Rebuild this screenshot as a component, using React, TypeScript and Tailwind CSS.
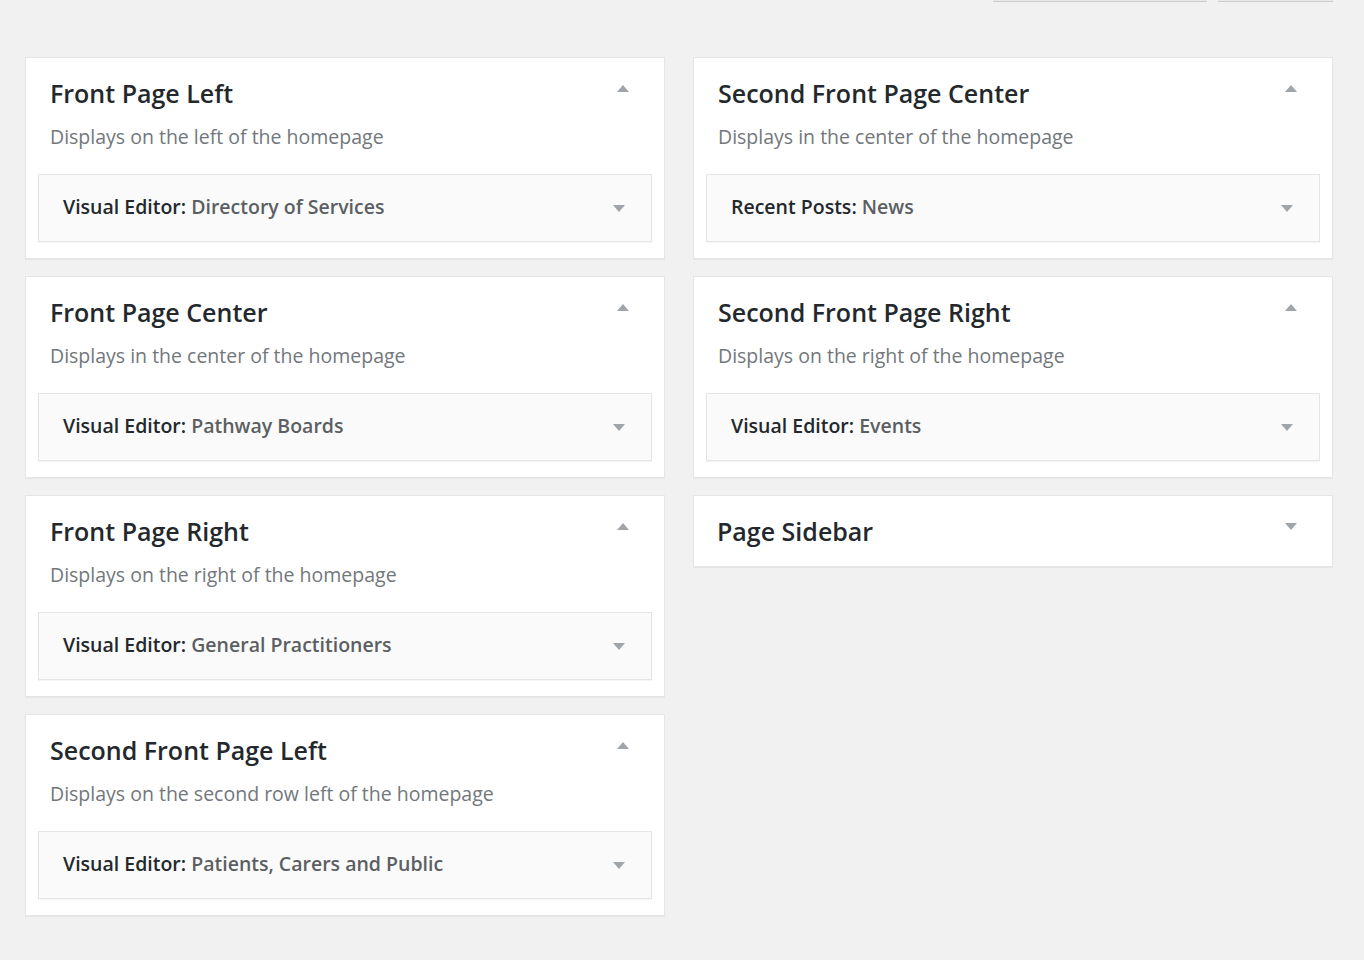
import React from "react";

type Widget = { type: string; name: string };
type Area = { title: string; desc?: string; widget?: Widget; open: boolean };

const left: Area[] = [
  { title: "Front Page Left", desc: "Displays on the left of the homepage", widget: { type: "Visual Editor", name: "Directory of Services" }, open: true },
  { title: "Front Page Center", desc: "Displays in the center of the homepage", widget: { type: "Visual Editor", name: "Pathway Boards" }, open: true },
  { title: "Front Page Right", desc: "Displays on the right of the homepage", widget: { type: "Visual Editor", name: "General Practitioners" }, open: true },
  { title: "Second Front Page Left", desc: "Displays on the second row left of the homepage", widget: { type: "Visual Editor", name: "Patients, Carers and Public" }, open: true },
];

const right: Area[] = [
  { title: "Second Front Page Center", desc: "Displays in the center of the homepage", widget: { type: "Recent Posts", name: "News" }, open: true },
  { title: "Second Front Page Right", desc: "Displays on the right of the homepage", widget: { type: "Visual Editor", name: "Events" }, open: true },
  { title: "Page Sidebar", open: false },
];

function Tri({ up }: { up: boolean }) {
  return (
    <svg width="12" height="8" viewBox="0 0 12 8" className="block">
      {up ? <polygon points="0,7 6,0 12,7" fill="#a0a5aa" /> : <polygon points="0,0 12,0 6,7" fill="#a0a5aa" />}
    </svg>
  );
}

function Card({ a }: { a: Area }) {
  if (!a.open) {
    return (
      <div className="bg-white border border-[#e5e5e5] shadow-[0_1px_1px_rgba(0,0,0,0.04)] h-[72px] flex items-center justify-between pl-[23px] pr-[35px]">
        <div className="text-[25px] font-semibold text-[#23282d] leading-none">{a.title}</div>
        <div className="-mt-[8px]"><Tri up={false} /></div>
      </div>
    );
  }
  return (
    <div className="h-[202px] bg-white border border-[#e5e5e5] shadow-[0_1px_1px_rgba(0,0,0,0.04)] px-[12px]">
      <div className="flex justify-between items-start pl-[12px] pr-[23px] pt-[20px]">
        <div className="text-[25px] font-semibold text-[#23282d] leading-[30px]">{a.title}</div>
        <div className="mt-[7px]"><Tri up={true} /></div>
      </div>
      <div className="pl-[12px] mt-[16px] text-[19.5px] text-[#72777c] leading-[26px]">{a.desc}</div>
      {a.widget && (
        <div className="mt-[24px] h-[68px] bg-[#fafafa] border border-[#e5e5e5] shadow-[0_1px_1px_rgba(0,0,0,0.04)] flex items-center justify-between pl-[24px] pr-[26px]">
          <div className="text-[19.5px] font-semibold leading-none mb-[2px]">
            <span className="text-[#23282d]">{a.widget.type}:</span>{" "}
            <span className="text-[#5b5f63]">{a.widget.name}</span>
          </div>
          <div className="mt-[2px]"><Tri up={false} /></div>
        </div>
      )}
    </div>
  );
}

export default function App() {
  return (
    <div className="min-h-[960px] bg-[#f1f1f1] relative" style={{ fontFamily: '"Open Sans", "Noto Sans", sans-serif' }}>
      <div className="flex justify-end gap-[11px] pr-[31px] h-[57px] items-start">
        <div className="w-[214px] h-[2px] bg-[#e8e8e8] border-b border-[#cccccc]" />
        <div className="w-[115px] h-[2px] bg-[#e8e8e8] border-b border-[#cccccc]" />
      </div>
      <div className="flex gap-[28px] pl-[25px]">
        <div className="w-[640px] flex flex-col gap-[17px]">
          {left.map((a) => <Card key={a.title} a={a} />)}
        </div>
        <div className="w-[640px] flex flex-col gap-[17px]">
          {right.map((a) => <Card key={a.title} a={a} />)}
        </div>
      </div>
    </div>
  );
}
